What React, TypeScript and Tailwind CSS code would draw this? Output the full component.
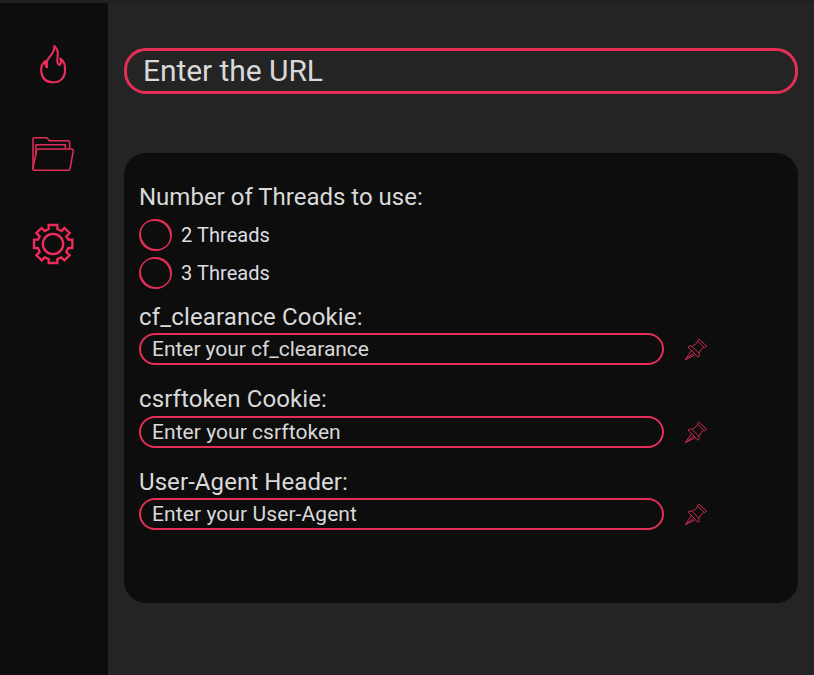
import React from "react";

function FlameIcon() {
  return (
    <svg className="h-[60px] w-[70px]" viewBox="0 0 210 180" fill="none" stroke="#f02c5c" strokeWidth="6.2" strokeLinejoin="round">
      <path d="M103 33C106 50 92 60 84 72C79 80 80 89 81 97C76 93 75 85 76 78C64 88 62 99 64 111C67 132 81 142 100 142C122 142 134 127 135 110C136 95 135 79 121 71C124 78 125 85 119 90C108 86 112 74 113 65C115 52 114 42 103 33Z" />
    </svg>
  );
}

function FolderIcon() {
  return (
    <svg className="h-[60px] w-[70px]" viewBox="0 0 210 180" fill="none" stroke="#df2c58" strokeWidth="4.6" strokeLinejoin="round">
      <path d="M39 132V43Q39 38 44 38H77Q82 38 85 43L88 47H143Q149 47 149 54V71" />
      <path d="M48 92V59H136V71" />
      <path d="M56 72H153Q161 72 160 78L150 131Q149 136 144 136H43Q38 136 39 130L49 78Q50 72 56 72Z" />
    </svg>
  );
}

function GearIcon() {
  return (
    <svg className="h-[60px] w-[70px]" viewBox="0 0 210 180" fill="none" stroke="#f02c5c" strokeWidth="7">
      <path d="M86 30H112V42L125 48L133 39L149 54L139 64L145 74H157V99H145L139 111L149 121L133 136L124 127L112 132V144H86V132L74 127L65 136L49 121L59 111L54 99H42V74H54L59 64L49 54L65 39L74 48L86 42Z" />
      <circle cx="99" cy="87" r="30.5" />
    </svg>
  );
}

function PinIcon() {
  return (
    <svg className="h-10 w-[60px]" viewBox="0 0 180 120" fill="none" stroke="#cb2951" strokeWidth="3" strokeLinejoin="round">
      <path d="M86 27L110 48L103 53L82 33Z" />
      <path d="M83 34Q80 43 66 49L87 70Q91 58 101 52" />
      <path d="M66 49Q59 46 54 51L84 82Q89 77 87 70" />
      <path d="M64 62L46 89L76 74M72 69L46 89" />
    </svg>
  );
}

interface FieldProps {
  label: string;
  placeholder: string;
  labelClass: string;
  inputClass: string;
  pinClass: string;
}

function Field({ label, placeholder, labelClass, inputClass, pinClass }: FieldProps) {
  return (
    <section className="h-[82.5px]">
      <label className={`block h-8 text-2xl ${labelClass}`}>{label}</label>
      <div className="flex h-8 items-center">
        <input
          aria-label={label}
          placeholder={placeholder}
          className={`h-8 w-[525px] rounded-2xl border-2 border-[#e42e57] bg-transparent pl-[11px] text-[21px] leading-7 outline-none placeholder:text-[#d9d9d9] placeholder:opacity-100 ${inputClass}`}
        />
        <button className={`ml-[6px] ${pinClass}`} aria-label="Pin"><PinIcon /></button>
      </div>
    </section>
  );
}

function ThreadOption({ label }: { label: string }) {
  return (
    <label className="flex h-[38px] items-center text-xl tracking-[0.06px] text-[#dddde2]">
      <input
        type="radio"
        name="threads"
        className="mr-[9px] flex h-8 w-[33px] appearance-none items-center justify-center rounded-full bg-[#e02d55] before:h-7 before:w-[29px] before:rounded-tl-[13px] before:rounded-tr-[16px] before:rounded-br-[13px] before:rounded-bl-[16px] before:bg-[#0d0d0d] before:content-['']"
      />
      {label}
    </label>
  );
}

export default function App() {
  return (
    <div className="flex h-[675px] w-[814px] border-t-[3px] border-[#202020] bg-[#242424] font-['Roboto',sans-serif] text-[#d9d9d9]">
      <nav className="flex w-[108px] flex-col items-start gap-[30px] bg-[#0d0d0d] pl-5 pt-8">
        <FlameIcon />
        <FolderIcon />
        <GearIcon />
      </nav>
      <main className="flex-1 px-4 pt-[45px]">
        <input
          aria-label="URL"
          placeholder="Enter the URL"
          className="block h-[46px] w-full rounded-[22px] border-3 border-[#e42e57] bg-transparent pb-[2px] pl-4 text-[30px] tracking-[-0.06px] outline-none placeholder:text-[#d9d9d9] placeholder:opacity-100"
        />
        <div className="mt-[59px] h-[450px] rounded-[22px] bg-[#0d0d0d] pl-[15px] pt-7">
          <h2 className="h-[35px] text-2xl leading-8">Number of Threads to use:</h2>
          <div className="h-[85px]">
            <ThreadOption label="2 Threads" />
            <ThreadOption label="3 Threads" />
          </div>
          <Field label="cf_clearance Cookie:" placeholder="Enter your cf_clearance" labelClass="leading-8 tracking-[0.15px]" inputClass="tracking-[-0.04px]" pinClass="pt-px" />
          <Field label="csrftoken Cookie:" placeholder="Enter your csrftoken" labelClass="leading-[30px] tracking-[0.1px]" inputClass="tracking-[0.05px]" pinClass="pt-[3px]" />
          <Field label="User-Agent Header:" placeholder="Enter your User-Agent" labelClass="leading-8 tracking-[0.08px]" inputClass="tracking-[0.09px]" pinClass="pt-px" />
        </div>
      </main>
    </div>
  );
}
